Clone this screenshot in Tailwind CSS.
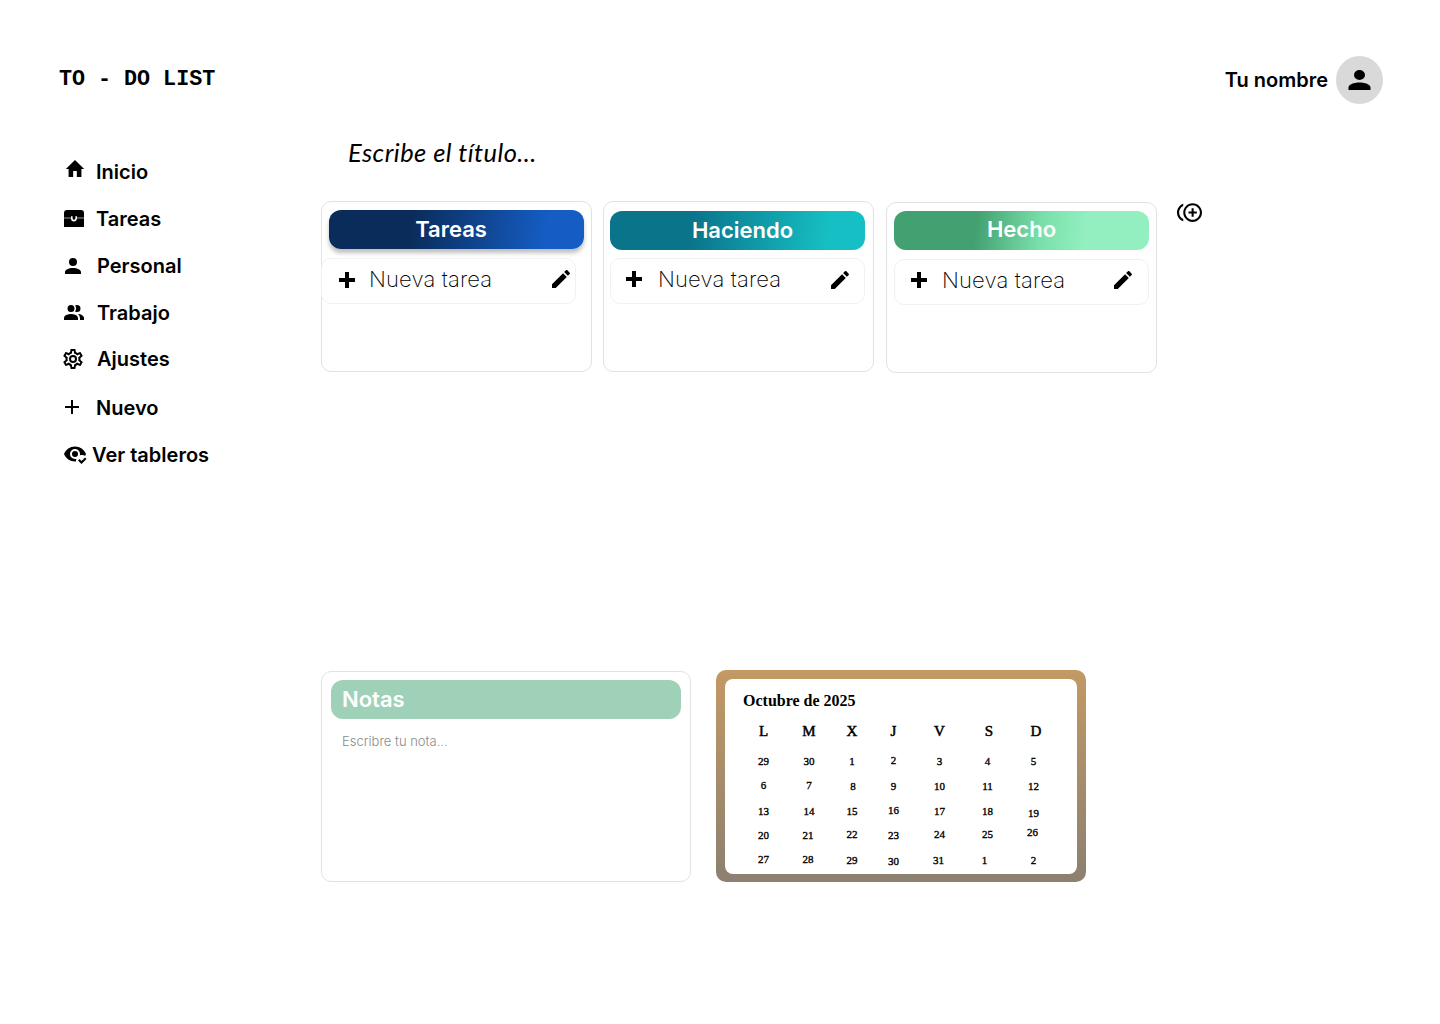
<!DOCTYPE html>
<html lang="es">
<head>
<meta charset="utf-8">
<title>To - Do List</title>
<script src="https://cdn.jsdelivr.net/npm/@tailwindcss/browser@4"></script>
</head>
<body class="h-[1024px] w-[1440px] overflow-hidden bg-white font-['Inter',sans-serif] text-black">
<header class="flex h-[120px] items-start justify-between pr-[57px] pl-[59px] pt-14">
  <h1 class="mt-[10px] font-['Liberation_Mono',monospace] text-[21.7px] leading-7 font-bold whitespace-pre">TO - DO LIST</h1>
  <div class="flex items-center gap-2">
    <span class="text-xl font-semibold">Tu nombre</span>
    <span class="flex h-12 w-[47px] items-center justify-center rounded-[50%] bg-[#d9d9d9]">
      <svg class="h-[30px] w-[33px]" viewBox="0 0 24 24" preserveAspectRatio="none"><path d="M12 4a4 4 0 1 1 0 8 4 4 0 0 1 0-8m0 10c4.42 0 8 1.79 8 4v2H4v-2c0-2.21 3.58-4 8-4z"/></svg>
    </span>
  </div>
</header>

<div class="flex">
  <nav class="w-[321px] pt-[27.5px] pl-[61px] text-xl leading-6 font-semibold">
    <a class="flex h-12 items-center"><svg class="mb-[5px] ml-[3px] h-6 w-[22px]" viewBox="0 0 24 24" preserveAspectRatio="none"><path d="M10 20v-6h4v6h5v-8h3L12 3 2 12h3v8z"/></svg><span class="ml-[10px]">Inicio</span></a>
    <a class="flex h-[46px] items-center"><svg class="ml-[3px] h-[17px] w-5" viewBox="0 0 20 17"><path d="M3 0h14a3 3 0 0 1 3 3v14H0V3a3 3 0 0 1 3-3z"/><path d="M0 8h7.500M12.500 8H20" stroke="#999" stroke-width="1.200"/><path d="M7.800 6.200v2a2.200 2.400 0 0 0 4.400 0v-2" fill="none" stroke="#fff" stroke-width="1.600"/></svg><span class="ml-3">Tareas</span></a>
    <a class="flex h-12 items-center"><svg class="size-6" viewBox="0 0 24 24"><path d="M12 4a4 4 0 1 1 0 8 4 4 0 0 1 0-8m0 10c4.420 0 8 1.790 8 4v2H4v-2c0-2.210 3.580-4 8-4z"/></svg><span class="ml-3">Personal</span></a>
    <a class="flex h-[47px] items-center"><svg class="ml-px size-6" viewBox="0 0 24 24"><path d="M16 17v2H2v-2s0-4 7-4 7 4 7 4M12.500 7.500A3.500 3.500 0 1 0 9 11a3.500 3.500 0 0 0 3.500-3.500M15.940 13A5.320 5.320 0 0 1 18 17v2h4v-2s0-3.630-6.060-4M15 4a3.390 3.390 0 0 0-1.930.590 5 5 0 0 1 0 5.820A3.390 3.390 0 0 0 15 11a3.500 3.500 0 0 0 0-7"/></svg><span class="ml-[11px]">Trabajo</span></a>
    <a class="flex h-[45px] items-center"><svg class="size-6" viewBox="0 0 24 24"><path d="M12 8a4 4 0 0 1 4 4 4 4 0 0 1-4 4 4 4 0 0 1-4-4 4 4 0 0 1 4-4m0 2a2 2 0 0 0-2 2 2 2 0 0 0 2 2 2 2 0 0 0 2-2 2 2 0 0 0-2-2m-2 12c-.25 0-.46-.18-.5-.42l-.37-2.650c-.63-.25-1.170-.590-1.690-.990l-2.490 1.010c-.22.080-.490 0-.610-.220l-2-3.460a.493.493 0 0 1 .120-.640l2.110-1.660L4.500 12l.070-1-2.110-1.630a.493.493 0 0 1-.120-.640l2-3.460c.120-.220.390-.310.610-.220l2.490 1c.520-.390 1.060-.730 1.690-.980l.370-2.650c.040-.240.250-.420.500-.420h4c.250 0 .460.180.500.420l.370 2.650c.630.250 1.170.590 1.690.980l2.490-1c.220-.090.490 0 .610.220l2 3.460c.130.220.070.490-.120.640L19.430 11l.070 1-.070 1 2.110 1.630c.190.150.250.420.120.640l-2 3.460c-.120.220-.390.310-.610.220l-2.490-1c-.520.390-1.060.730-1.690.980l-.370 2.650c-.040.240-.250.420-.500.420zm1.250-18-.370 2.610c-1.200.250-2.260.890-3.030 1.780L5.440 7.350l-.750 1.300L6.800 10.200a5.550 5.550 0 0 0 0 3.600l-2.120 1.560.75 1.300 2.430-1.040c.77.880 1.820 1.520 3.010 1.760l.37 2.620h1.520l.37-2.610c1.190-.250 2.240-.890 3.010-1.770l2.430 1.040.75-1.300-2.120-1.550c.400-1.170.400-2.440 0-3.610l2.110-1.550-.750-1.300-2.410 1.040a5.420 5.420 0 0 0-3.030-1.770L12.750 4z"/></svg><span class="ml-3">Ajustes</span></a>
    <a class="flex h-[53px] items-center"><svg class="mb-0.5 ml-1 size-3.5" viewBox="0 0 14 14"><path d="M6 0h2v6h6v2H8v6H6V8H0V6h6z"/></svg><span class="ml-[17px]">Nuevo</span></a>
    <a class="flex h-10 items-center"><svg class="-mt-0.5 ml-[2px] size-6" viewBox="0 0 24 24"><path d="m23.500 17-5 5-3.500-3.500 1.500-1.500 2 2 3.500-3.500 1.500 1.500M12 9a3 3 0 1 1 0 6 3 3 0 0 1 0-6m0 8c.5 0 .970-.070 1.420-.210-.270.710-.420 1.430-.420 2.210v.450l-1 .050c-5 0-9.270-3.110-11-7.500 1.730-4.390 6-7.500 11-7.500s9.270 3.110 11 7.500c-.250.640-.560 1.260-.920 1.850-.900-.540-1.960-.850-3.080-.850-.780 0-1.500.150-2.210.420.140-.450.210-.920.210-1.420a5 5 0 1 0-5 5z"/></svg><span class="ml-[5px]">Ver tableros</span></a>
  </nav>

  <main class="w-[900px]">
    <h2 class="ml-[27px] pt-[14px] font-['Lato',cursive] text-[25.500px] leading-9 tracking-[0.45px] whitespace-nowrap italic">Escribe el título...</h2>
    <div class="flex h-[470px] items-start pt-[31px]">
      <section class="h-[171px] w-[271px] rounded-[10px] border border-[#e2e2e2] pt-2">
        <h3 class="ml-[7px] flex h-[39px] w-[255px] items-center justify-center rounded-[12px] bg-[linear-gradient(97deg,#0a2c5a_32%,#155dc4_85%)] pr-[11px] text-[22px] font-semibold text-white shadow-[0_4px_4px_rgba(0,0,0,0.25)]">Tareas</h3>
        <div class="mt-[9px] -ml-px flex h-[46px] w-[255px] items-center rounded-[10px] border border-[#f1f1f1] pb-1 pl-[13px]">
          <svg class="mt-px size-6" viewBox="0 0 24 24"><path d="M20 14h-6v6h-4v-6H4v-4h6V4h4v6h6z"/></svg>
          <span class="ml-[10px] w-[180px] text-[22px] font-extralight tracking-[0.15px]">Nueva tarea</span>
          <svg class="size-6 shrink-0" viewBox="0 0 24 24"><path d="M20.710 7.040c.390-.390.390-1.040 0-1.410l-2.340-2.340c-.370-.390-1.020-.390-1.410 0l-1.840 1.830 3.750 3.750M3 17.250V21h3.750L17.810 9.930l-3.750-3.750z"/></svg>
        </div>
      </section>
      <section class="ml-[11px] h-[171px] w-[271px] rounded-[10px] border border-[#e2e2e2] pt-[9px]">
        <h3 class="ml-[6px] flex h-[39px] w-[255px] items-center justify-center rounded-[12px] bg-[linear-gradient(97deg,#0a748b_32%,#16bfc3_85%)] pl-[10px] text-[22px] font-semibold text-white">Haciendo</h3>
        <div class="mt-2 ml-[6px] flex h-[46px] w-[255px] items-center rounded-[10px] border border-[#f1f1f1] pb-1 pl-[11px]">
          <svg class="-mt-px size-6" viewBox="0 0 24 24"><path d="M20 14h-6v6h-4v-6H4v-4h6V4h4v6h6z"/></svg>
          <span class="ml-3 w-[170px] text-[22px] font-extralight tracking-[0.15px]">Nueva tarea</span>
          <svg class="mt-px size-6 shrink-0" viewBox="0 0 24 24"><path d="M20.710 7.040c.390-.390.390-1.040 0-1.410l-2.340-2.340c-.370-.390-1.020-.390-1.410 0l-1.840 1.830 3.750 3.750M3 17.250V21h3.750L17.810 9.930l-3.750-3.750z"/></svg>
        </div>
      </section>
      <section class="mt-px ml-3 h-[171px] w-[271px] rounded-[10px] border border-[#e2e2e2] pt-2">
        <h3 class="ml-[7px] flex h-[39px] w-[255px] items-center justify-center rounded-[12px] bg-[linear-gradient(97deg,#43a071_32%,#78dfa9_57%,#93efc0_75%)] pb-0.5 text-[22px] font-semibold text-white">Hecho</h3>
        <div class="mt-[9px] ml-[7px] flex h-[46px] w-[255px] items-center rounded-[10px] border border-[#f1f1f1] pb-1 pl-3">
          <svg class="size-6" viewBox="0 0 24 24"><path d="M20 14h-6v6h-4v-6H4v-4h6V4h4v6h6z"/></svg>
          <span class="ml-[11px] w-[169px] text-[22px] font-extralight tracking-[0.15px]">Nueva tarea</span>
          <svg class="size-6 shrink-0" viewBox="0 0 24 24"><path d="M20.710 7.040c.390-.390.390-1.040 0-1.410l-2.340-2.340c-.370-.390-1.020-.390-1.410 0l-1.840 1.830 3.750 3.750M3 17.250V21h3.750L17.810 9.930l-3.750-3.750z"/></svg>
        </div>
      </section>
      <svg class="-mt-px ml-5 size-[25px]" viewBox="0 0 24 24"><path d="M16 8h-2v3h-3v2h3v3h2v-3h3v-2h-3zM2 12c0-2.790 1.640-5.200 4.010-6.320V3.520C2.520 4.760 0 8.090 0 12s2.520 7.240 6.010 8.480v-2.160C3.640 17.200 2 14.790 2 12m13-9c-4.960 0-9 4.040-9 9s4.040 9 9 9 9-4.040 9-9-4.040-9-9-9m0 16c-3.860 0-7-3.140-7-7s3.140-7 7-7 7 3.140 7 7-3.140 7-7 7"/></svg>
    </div>

    <div class="mt-[30px] flex items-start gap-[25px]">
      <section class="mt-px h-[211px] w-[370px] rounded-[10px] border border-[#e2e2e2] px-[9px] pt-2">
        <h3 class="flex h-[39px] items-center rounded-[12px] bg-[#9fd1b9] pl-[11px] text-[22px] font-semibold text-white">Notas</h3>
        <p class="mt-3 ml-[11px] text-[13px] leading-5 font-light text-[#8a8a8a]">Escribre tu nota...</p>
      </section>
      <section class="h-[212px] w-[370px] rounded-[10px] bg-linear-to-b from-[#c39964] to-[#8c8070] p-[9px] pb-2">
        <div class="h-full rounded-[8px] bg-white pt-3 pl-[18px] font-['Liberation_Serif',serif]">
          <h3 class="text-base leading-5 font-bold">Octubre de 2025</h3>
          <div class="mt-[10px] grid h-5 grid-cols-[41px_50px_36px_47px_45px_51px_41px] text-center text-[15px] leading-5 [-webkit-text-stroke:0.5px_black]">
            <span>L</span><span>M</span><span>X</span><span>J</span><span>V</span><span class="pl-[3px]">S</span><span class="pl-[5px]">D</span>
          </div>
          <div class="mt-2 grid auto-rows-[25px] grid-cols-[41px_50px_36px_47px_45px_51px_41px] text-center text-[11px] leading-[25px] [-webkit-text-stroke:0.35px_black]">
            <span>29</span><span>30</span><span>1</span><span class="-translate-y-px">2</span><span>3</span><span>4</span><span>5</span>
            <span class="-translate-y-px">6</span><span class="-translate-y-px">7</span><span class="translate-x-px">8</span><span>9</span><span>10</span><span>11</span><span>12</span>
            <span>13</span><span>14</span><span>15</span><span class="-translate-y-px">16</span><span>17</span><span>18</span><span class="translate-y-0.5">19</span>
            <span class="-translate-y-px">20</span><span class="-translate-x-px -translate-y-px">21</span><span class="-translate-y-0.5">22</span><span class="-translate-y-px">23</span><span class="-translate-y-0.5">24</span><span class="-translate-y-0.5">25</span><span class="-translate-x-px -translate-y-1">26</span>
            <span class="-translate-y-0.5">27</span><span class="-translate-x-px -translate-y-0.5">28</span><span class="-translate-y-px">29</span><span>30</span><span class="-translate-x-px -translate-y-px">31</span><span class="-translate-x-[3px] -translate-y-px">1</span><span class="-translate-y-px">2</span>
          </div>
        </div>
      </section>
    </div>
  </main>
</div>
</body>
</html>
